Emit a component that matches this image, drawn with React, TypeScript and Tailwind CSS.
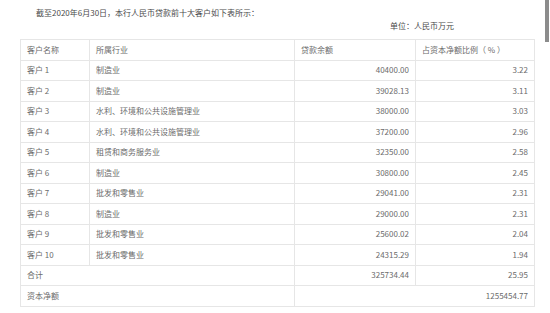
const rows = [
  { name: "客户 1", industry: "制造业", loan: "40400.00", ratio: "3.22" },
  { name: "客户 2", industry: "制造业", loan: "39028.13", ratio: "3.11" },
  { name: "客户 3", industry: "水利、环境和公共设施管理业", loan: "38000.00", ratio: "3.03" },
  { name: "客户 4", industry: "水利、环境和公共设施管理业", loan: "37200.00", ratio: "2.96" },
  { name: "客户 5", industry: "租赁和商务服务业", loan: "32350.00", ratio: "2.58" },
  { name: "客户 6", industry: "制造业", loan: "30800.00", ratio: "2.45" },
  { name: "客户 7", industry: "批发和零售业", loan: "29041.00", ratio: "2.31" },
  { name: "客户 8", industry: "制造业", loan: "29000.00", ratio: "2.31" },
  { name: "客户 9", industry: "批发和零售业", loan: "25600.02", ratio: "2.04" },
  { name: "客户 10", industry: "批发和零售业", loan: "24315.29", ratio: "1.94" },
];

const cell = "border border-[#e6e6e6] h-[20.5px] px-[6px] py-0 align-middle";

export default function App() {
  return (
    <div
      className="relative h-[313px] w-[550px] overflow-hidden bg-white text-[8px] text-[#6b6b6b]"
      style={{ fontFamily: '"Noto Sans CJK SC", "Noto Sans", sans-serif' }}
    >
      <div className="pl-[20px] pt-[7px]">
        <p className="indent-[16px] leading-[12px] text-[#4a4a4a]">
          截至2020年6月30日，本行人民币贷款前十大客户如下表所示：
        </p>
        <p className="mt-[0.5px] pl-[370px] leading-[12px] text-[#4a4a4a]">单位：人民币万元</p>
        <table className="mt-[7.5px] w-[514px] table-fixed border-collapse">
          <colgroup>
            <col className="w-[69px]" />
            <col className="w-[205px]" />
            <col className="w-[121px]" />
            <col className="w-[119px]" />
          </colgroup>
          <tbody>
            <tr>
              <td className={cell}>客户名称</td>
              <td className={cell}>所属行业</td>
              <td className={cell}>贷款余额</td>
              <td className={cell}>占资本净额比例（ % ）</td>
            </tr>
            {rows.map((r, i) => (
              <tr key={i}>
                <td className={cell}>{r.name}</td>
                <td className={cell}>{r.industry}</td>
                <td className={`${cell} text-right`}>{r.loan}</td>
                <td className={`${cell} text-right`}>{r.ratio}</td>
              </tr>
            ))}
            <tr>
              <td className={cell} colSpan={2}>合计</td>
              <td className={`${cell} text-right`}>325734.44</td>
              <td className={`${cell} text-right`}>25.95</td>
            </tr>
            <tr>
              <td className={cell} colSpan={2}>资本净额</td>
              <td className={`${cell} text-right`} colSpan={2}>1255454.77</td>
            </tr>
          </tbody>
        </table>
      </div>
      <div className="absolute right-[1px] top-0 h-[42px] w-[4px] bg-[#8c8c8c]" />
    </div>
  );
}
